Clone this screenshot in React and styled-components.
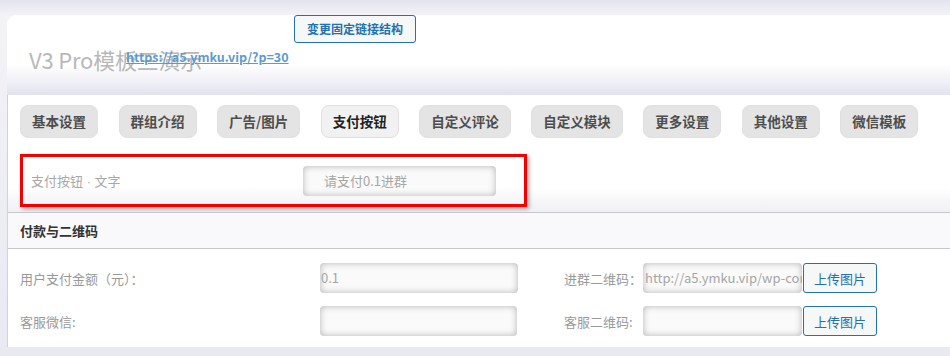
import React from 'react'
import styled, { createGlobalStyle } from 'styled-components'

const GlobalStyle = createGlobalStyle`
body {
  margin: 0;
  background: #e6e6f0;
  font-family: "Noto Sans CJK SC", "Noto Sans", "Liberation Sans", sans-serif;
  font-size: 13px;
}
`

const Page = styled.div`
width: 950px;
height: 356px;
overflow: hidden;
padding: 15px 0 0 7px;
box-sizing: border-box;
background: linear-gradient(#e4e4ef, #f2f2f7 15px, #e9e9f2 100%);
`

const Header = styled.div`
position: relative;
height: 80px;
border-radius: 9px 0 0 0;
background: linear-gradient(#ffffff 0%, #ffffff 62%, #ececf4 88%, #e2e2ee 100%);
`

const TopBar = styled.div`
display: flex;
padding-left: 287px;
`

const OutlineButton = styled.button`
height: 28px;
padding: 0 12px;
border: 1px solid #2271b1;
border-radius: 3px;
background: #f6f7f7;
color: #2271b1;
font-family: inherit;
font-size: 12px;
font-weight: bold;
line-height: 26px;
`

const Title = styled.h1`
margin: 1px 0 0 22px;
font-size: 22px;
font-weight: normal;
color: #b8b8b8;
line-height: 30px;
letter-spacing: -0.2px;
`

const PermaLink = styled.a`
position: absolute;
left: 119px;
top: 32px;
color: #5a9bd3;
font-size: 12.5px;
font-weight: bold;
text-decoration: underline;
`

const Content = styled.div`
background: #fff;
border-left: 1px solid #d2d2dc;
height: 252px;
`

const Upper = styled.div`
padding: 10px 0 5px 12px;
background: linear-gradient(#fff 0%, #fff 80%, #efeff5 100%);
`

const Tabs = styled.div`
display: flex;
gap: 20.5px;
`

const Tab = styled.div`
height: 33px;
padding: 0 11px;
box-sizing: border-box;
border: 1px solid #e0e0e0;
border-radius: 8px;
background: ${p => (p.$active ? '#f1f1f1' : '#e4e4e4')};
color: ${p => (p.$active ? '#222' : '#4d4d4d')};
font-weight: bold;
font-size: 13.5px;
line-height: 31px;
white-space: nowrap;
`

const Highlight = styled.div`
width: 507px;
height: 53px;
margin-top: 16px;
box-sizing: border-box;
border: 3px solid #f40000;
box-shadow: 2px 2px 4px rgba(0, 0, 0, 0.35);
display: flex;
align-items: center;
padding-left: 8px;
background: linear-gradient(#fff 60%, #f4f4f8 100%);
`

const FieldLabel = styled.span`
width: 272px;
color: #a8a8a8;
font-size: 13px;
`

const Dot = styled.span`
font-family: "Liberation Sans", sans-serif;
`

const Input = styled.div`
width: ${p => p.$w}px;
height: 30px;
box-sizing: border-box;
border-radius: 4px;
background: #fafafa;
box-shadow: inset 0 0 7px rgba(0, 0, 0, 0.28);
padding-left: ${p => p.$pad || 1}px;
color: #a6a6a6;
font-size: 13px;
line-height: 30px;
white-space: nowrap;
overflow: hidden;
`

const Section = styled.div`
border-top: 1px solid #c8c8cc;
`

const SectionHead = styled.div`
height: 35px;
line-height: 35px;
padding-left: 12px;
background: #f9f9fb;
border-bottom: 1px solid #c8c8cc;
color: #333;
font-weight: bold;
font-size: 13px;
`

const FormGrid = styled.div`
display: grid;
grid-template-columns: 300px 198px 46px 79px 160px 74px;
row-gap: 13px;
align-items: center;
padding: 14px 0 0 12px;
`

const Label = styled.span`
color: #999;
font-size: 13px;
white-space: nowrap;
`

const Spacer = styled.span``

const UploadButton = styled.button`
height: 30px;
width: 74px;
border: 1px solid #2271b1;
border-radius: 3px;
background: #f6f7f7;
color: #2271b1;
font-family: inherit;
font-size: 13px;
`

const tabs = ['基本设置', '群组介绍', '广告/图片', '支付按钮', '自定义评论', '自定义模块', '更多设置', '其他设置', '微信模板']

export default function App() {
  return (
    <>
      <GlobalStyle />
      <Page>
        <Header>
          <TopBar>
            <OutlineButton>变更固定链接结构</OutlineButton>
          </TopBar>
          <Title>V3 Pro模板三演示</Title>
          <PermaLink>https://a5.ymku.vip/?p=30</PermaLink>
        </Header>
        <Content>
          <Upper>
            <Tabs>
              {tabs.map(t => (
                <Tab key={t} $active={t === '支付按钮'}>{t}</Tab>
              ))}
            </Tabs>
            <Highlight>
              <FieldLabel>支付按钮<Dot> · </Dot>文字</FieldLabel>
              <Input $w={193} $pad={21}>请支付0.1进群</Input>
            </Highlight>
          </Upper>
          <Section>
            <SectionHead>付款与二维码</SectionHead>
            <FormGrid>
              <Label>用户支付金额（元）：</Label>
              <Input $w={198}>0.1</Input>
              <Spacer />
              <Label>进群二维码：</Label>
              <Input $w={159} $pad={2}>http://a5.ymku.vip/wp-content/uploads/qr.png</Input>
              <UploadButton>上传图片</UploadButton>
              <Label>客服微信:</Label>
              <Input $w={197} />
              <Spacer />
              <Label>客服二维码:</Label>
              <Input $w={159} />
              <UploadButton>上传图片</UploadButton>
            </FormGrid>
          </Section>
        </Content>
      </Page>
    </>
  )
}
